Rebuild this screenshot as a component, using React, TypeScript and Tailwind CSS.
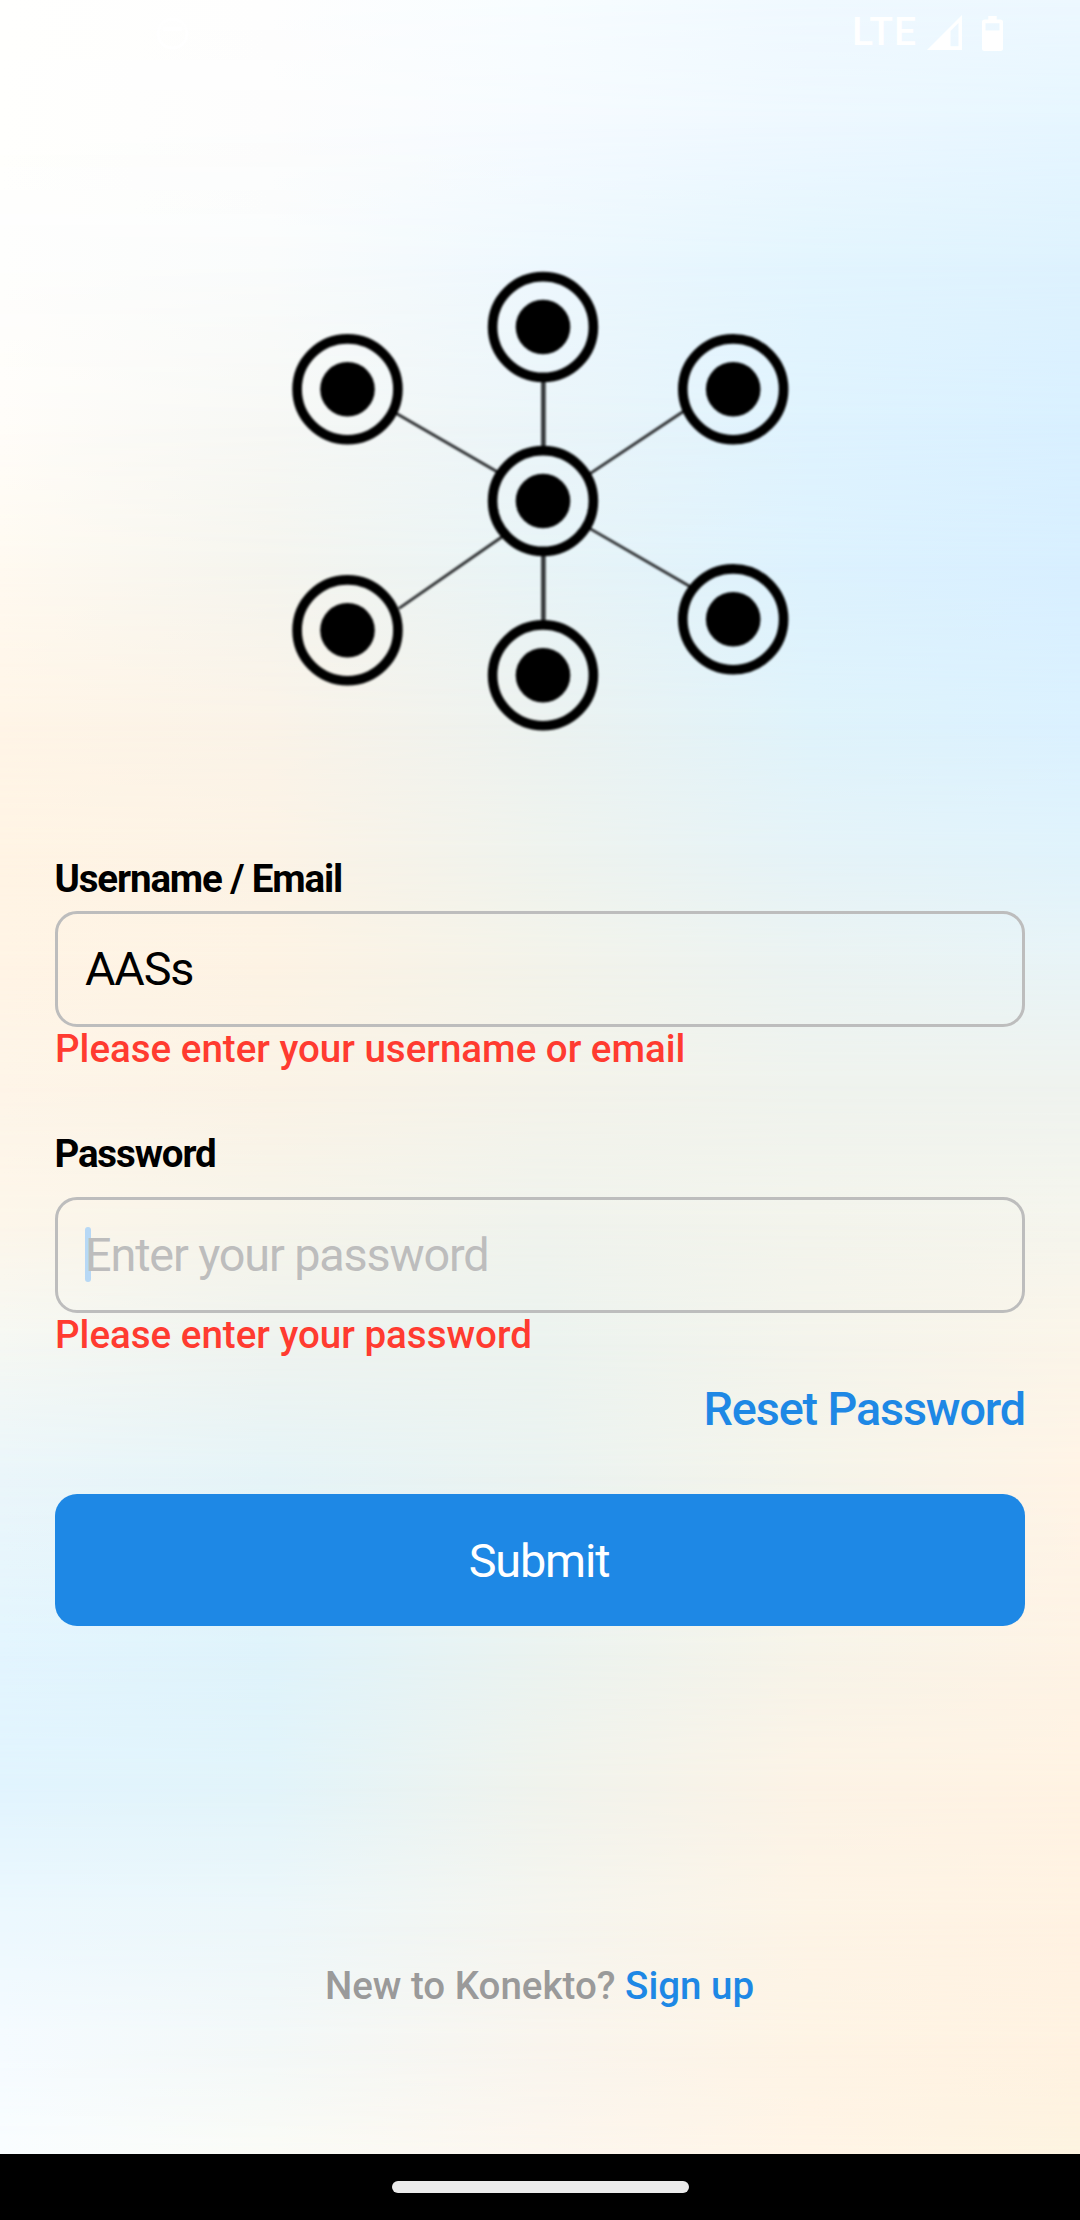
// Colour rows of the backdrop: [top edge, colours from left to right].
const MESH: [number, string[]][] = [
  [0, ["#fffffe", "#fefefe", "#f8fdff", "#f0f9ff", "#edf8ff"]],
  [120, ["#fffffd", "#fdfdfd", "#f6fbff", "#eef8ff", "#e6f6ff"]],
  [260, ["#fefefd", "#fafcfc", "#eef8fe", "#e3f5fe", "#def2fe"]],
  [420, ["#fffdf9", "#f7f8f5", "#ebf5f9", "#dff3fe", "#d9f0ff"]],
  [560, ["#fffaf1", "#f5f5ef", "#e8f4f7", "#ddf2fe", "#d8efff"]],
  [720, ["#fff5e7", "#faf3e8", "#ecf2f0", "#dff3fb", "#dbf1ff"]],
  [850, ["#fff4e4", "#fcf3e6", "#eff3ee", "#e5f3f8", "#e0f3fc"]],
  [960, ["#fff4e5", "#fdf3e4", "#f3f3ea", "#ebf3f2", "#e8f4f7"]],
  [1080, ["#fef5e8", "#fbf3e6", "#f4f3ea", "#eff3ee", "#eff3ef"]],
  [1220, ["#fdf6ea", "#f6f4ea", "#f0f3ed", "#f3f4ec", "#f5f5ed"]],
  [1340, ["#f6f8f3", "#eff3ef", "#ecf3ef", "#f4f4ec", "#fbf5e9"]],
  [1470, ["#ebf6fa", "#e6f4f7", "#ebf3f1", "#f5f4ea", "#fff4e6"]],
  [1650, ["#e3f5fe", "#dff3fb", "#ebf3f0", "#f7f4e9", "#fef3e5"]],
  [1780, ["#e1f4fe", "#e2f4fa", "#f0f3ed", "#fcf3e6", "#fff3e3"]],
  [1920, ["#ecf8fe", "#edf7fa", "#f5f5ef", "#fdf4e6", "#fff2e2"]],
  [2040, ["#f5fbff", "#f3f8f8", "#f9f5ee", "#fef4e5", "#fff2e1"]],
  [2154, ["#f9fdff", "#fafbf6", "#fcf6ee", "#fff4e6", "#fdf3e0"]],
];

function horizontal(colors: string[]) {
  return `linear-gradient(to right, ${colors.join(", ")})`;
}

function Backdrop() {
  return (
    <div className="absolute inset-0 -z-10 flex flex-col">
      {MESH.slice(0, -1).map(([y, colors], i) => {
        const [nextY, nextColors] = MESH[i + 1];
        return (
          <div key={y} style={{ height: nextY - y, backgroundImage: horizontal(colors) }}>
            <div
              className="h-full [mask-image:linear-gradient(to_bottom,transparent,black)]"
              style={{ backgroundImage: horizontal(nextColors) }}
            />
          </div>
        );
      })}
    </div>
  );
}

function StatusBar() {
  return (
    <header className="flex h-[66px] items-start justify-between pr-[77px] text-white">
      <svg width="33" height="33" viewBox="0 0 33 33" className="mt-[17px] ml-[156px]" fill="none">
        <circle cx="16.5" cy="16.5" r="14.5" stroke="white" strokeWidth="3" />
        <path d="M7 10h19v4H7z" fill="white" />
      </svg>
      <div className="flex items-start">
        <span className="mt-[10px] text-[39px] leading-[45px] font-medium tracking-[1px]">LTE</span>
        <svg width="35" height="35" viewBox="0 0 35 35" className="mt-[15px] ml-[10px]" fill="white">
          <path fillRule="evenodd" d="M0 35 35 0V35ZM23.5 31.3H31.5V8L23.5 16Z" />
        </svg>
        <svg width="21" height="35" viewBox="0 0 21 35" className="mt-[15.5px] ml-[20px]" fill="white">
          <path
            fillRule="evenodd"
            d="M6.3 0H14.7V3.5H18.5Q21 3.5 21 6V32.5Q21 35 18.5 35H2.5Q0 35 0 32.5V6Q0 3.5 2.5 3.5H6.3ZM3.5 7.2V14.5H17.5V7.2Z"
          />
        </svg>
      </div>
    </header>
  );
}

const NODES = [
  [343, 127],
  [147.5, 189.3],
  [533.2, 189.3],
  [343, 301],
  [147.5, 430.3],
  [533.2, 419.3],
  [343, 475.3],
];

function Logo() {
  return (
    <svg width="680" height="600" viewBox="0 0 680 600" className="mx-auto block blur-[0.8px]">
      <g stroke="#2c2e30" strokeWidth="2.8">
        <path d="M196 213.3 298 272.3" />
        <path d="M484 211 390 273.7" />
        <path d="M199 408.3 302.5 336.5" />
        <path d="M390 328.6 490 386.5" />
      </g>
      <path d="M343.4 180V247M343.4 355V422" stroke="#36393b" strokeWidth="4.6" />
      {NODES.map(([x, y]) => (
        <g key={`${x}-${y}`}>
          <circle cx={x} cy={y} r="50.4" fill="none" stroke="black" strokeWidth="9.6" />
          <circle cx={x} cy={y} r="27.3" />
        </g>
      ))}
    </svg>
  );
}

function ErrorText({ children }: { children: string }) {
  return <p className="mt-[-1px] text-[38.5px] leading-[45px] font-medium text-[#ff3b30]">{children}</p>;
}

const fieldClass =
  "flex h-[116px] items-start rounded-[22px] border-[3px] border-[#bdbdbd] px-[27px] pt-[28px] text-[46.75px] leading-[55px] tracking-[-1.13px]";
const labelClass = "ml-[-0.6px] text-[38.5px] leading-[45px] font-bold tracking-[-1.13px] text-black";

export default function App() {
  return (
    <div className="relative isolate flex h-[2220px] w-[1080px] flex-col overflow-hidden font-[Roboto,sans-serif]">
      <Backdrop />
      <StatusBar />

      <div className="mt-[134px] h-[600px]">
        <Logo />
      </div>

      <form className="mx-[55px] mt-[56px] flex flex-col">
        <label className={labelClass}>Username / Email</label>
        <div className={`${fieldClass} mt-[10px] text-black`}>AASs</div>
        <ErrorText>Please enter your username or email</ErrorText>

        <label className={`${labelClass} mt-[60px]`}>Password</label>
        <div className={`${fieldClass} relative mt-[21px] text-[#bdbdbd]`}>
          <span className="absolute top-[27px] left-[27px] h-[55px] w-[5.5px] rounded-full bg-[#b7d8f5]" />
          <span className="relative">Enter your password</span>
        </div>
        <ErrorText>Please enter your password</ErrorText>

        <a className="mt-[25px] self-end text-[46.75px] leading-[55px] font-medium tracking-[-1.13px] text-[#1e88e5]">
          Reset Password
        </a>
        <button
          type="button"
          className="mt-[57px] h-[132px] rounded-[22px] bg-[#1e88e5] pt-[2px] pr-[2px] text-[46.75px] leading-[55px] tracking-[-1.13px] text-white"
        >
          Submit
        </button>
      </form>

      <p className="mt-[337px] pr-px text-center text-[38.5px] leading-[45px] font-medium text-[#9a9a9a]">
        New to Konekto? <a className="text-[#1e88e5]">Sign up</a>
      </p>

      <footer className="mt-auto flex h-[66px] justify-center bg-black pt-[27px]">
        <div className="h-[12px] w-[297px] rounded-full bg-[#ebebeb]" />
      </footer>
    </div>
  );
}
